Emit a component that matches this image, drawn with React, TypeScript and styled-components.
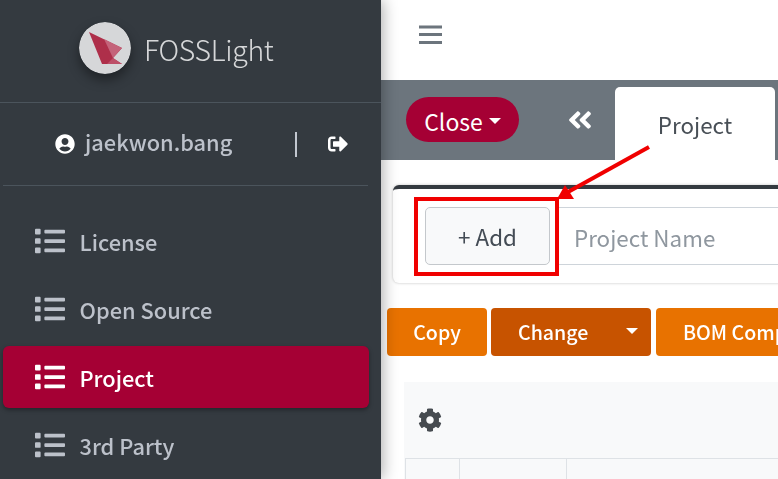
import React from "react";
import styled, { createGlobalStyle } from "styled-components";
import { FaList, FaUserCircle, FaSignOutAlt, FaCog, FaAngleDoubleLeft } from "react-icons/fa";

const Global = createGlobalStyle`
  html, body { margin: 0; padding: 0; background: #fff; overflow: hidden; }
  * { box-sizing: border-box; }
  body { font-family: "Noto Sans CJK KR", "Noto Sans", sans-serif; }
`;

const Page = styled.div`
  position: relative;
  display: flex;
  width: 778px;
  height: 479px;
  overflow: hidden;
`;

const Sidebar = styled.aside`
  flex: 0 0 381px;
  background: #343a40;
  box-shadow: 2px 0 14px rgba(0, 0, 0, 0.32);
  z-index: 1;
  filter: blur(0.35px);
`;

const Brand = styled.div`
  height: 103px;
  border-bottom: 1px solid #4b545c;
  display: flex;
  align-items: flex-start;
  padding: 22px 0 0 79px;
  gap: 14px;
`;

const LogoDisc = styled.svg`
  width: 52px;
  height: 52px;
  border-radius: 50%;
  box-shadow: 0 6px 12px rgba(0, 0, 0, 0.4);
  flex: none;
`;

const BrandName = styled.span`
  font-size: 28.4px;
  font-weight: 300;
  line-height: 54px;
  color: rgba(255, 255, 255, 0.8);
  letter-spacing: -0.3px;
  margin-left: -1px;
`;

const UserPanel = styled.div`
  height: 83px;
  margin: 0 13px 0 3px;
  border-bottom: 1px solid #4b545c;
  display: flex;
  align-items: center;
  color: #bcc1ca;
  padding: 0 0 0 52px;
  font-size: 21.8px;
  font-weight: 500;
  svg { color: #fff; flex: none; }
`;

const UserName = styled.span`
  margin-left: 10px;
  width: 210px;
  line-height: 1;
  padding-bottom: 4px;
`;

const Divider = styled.span`
  width: 2px;
  height: 25px;
  background: #c2c7d0;
  margin-right: 31px;
`;

const Nav = styled.nav`
  display: flex;
  flex-direction: column;
  gap: 6px;
  padding: 24px 12px 0 3px;
`;

const NavItem = styled.a<{ $active?: boolean }>`
  display: flex;
  align-items: center;
  gap: 14.5px;
  height: 62px;
  padding-left: 32px;
  border-radius: 6px;
  font-size: 21.8px;
  font-weight: 500;
  color: ${(p) => (p.$active ? "#fff" : "#bcc1ca")};
  background: ${(p) => (p.$active ? "#a50034" : "transparent")};
  box-shadow: ${(p) => (p.$active ? "0 2px 4px rgba(0,0,0,.35)" : "none")};
  svg { flex: none; }
`;

const Main = styled.main`
  flex: 1;
  min-width: 0;
  display: flex;
  flex-direction: column;
  filter: blur(0.35px);
`;

const TopBar = styled.header`
  height: 80px;
  flex: none;
  display: flex;
  align-items: center;
  padding: 0 0 10px 37px;
  color: #6c757d;
  background: #fff;
`;

const MenuGlyph = styled.svg`
  width: 24px;
  height: 20px;
`;

const TabBar = styled.div`
  height: 80px;
  flex: none;
  background: #6c757d;
  display: flex;
  align-items: flex-start;
  padding-left: 25px;
`;

const CloseButton = styled.button`
  margin-top: 17px;
  width: 113px;
  height: 45px;
  border: 0;
  border-radius: 23px;
  background: #a50034;
  color: #fff;
  font: inherit;
  font-size: 23px;
  display: flex;
  align-items: center;
  justify-content: center;
  gap: 6px;
  padding: 2px 0 0;
`;

const Caret = styled.i`
  width: 0;
  height: 0;
  border-left: 6px solid transparent;
  border-right: 6px solid transparent;
  border-top: 6px solid #fff;
`;

const Collapse = styled.span`
  margin: 26px 0 0 47px;
  color: #fff;
  width: 49px;
  display: flex;
  line-height: 0;
`;

const Tab = styled.div`
  margin-top: 7px;
  width: 160px;
  height: 73px;
  background: #fff;
  border-radius: 5px 5px 0 0;
  color: #495057;
  font-size: 22.4px;
  text-align: center;
  line-height: 74px;
`;

const Content = styled.div`
  flex: 1;
  min-height: 0;
  padding: 25px 0 0 6px;
`;

const SearchCard = styled.section`
  width: 420px;
  height: 98px;
  margin-left: 6px;
  border-top: 4px solid #343a40;
  border-radius: 6px;
  background: #fff;
  box-shadow: 0 0 3px rgba(0, 0, 0, 0.25);
  display: flex;
  gap: 6px;
  padding: 18px 0 0 32px;
`;

const AddButton = styled.button`
  width: 125px;
  height: 58px;
  background: #f8f9fa;
  border: 1px solid #c4c8cc;
  border-radius: 5px;
  font: inherit;
  font-size: 22.4px;
  color: #444c55;
  padding: 0;
`;

const NameField = styled.div`
  flex: 1;
  height: 58px;
  border: 1px solid #ced4da;
  border-right: 0;
  font-size: 22.4px;
  color: #8f979f;
  padding-left: 17px;
  line-height: 58px;
`;

const Actions = styled.div`
  display: flex;
  margin-top: 25px;
  height: 48px;
  width: 420px;
`;

const ActionButton = styled.button<{ $w: number; $gap: number; $dark?: boolean }>`
  flex: 0 0 ${(p) => p.$w}px;
  margin-right: ${(p) => p.$gap}px;
  background: ${(p) => (p.$dark ? "#c75300" : "#e87200")};
  border: 0;
  border-radius: 4px;
  color: #fff;
  font: inherit;
  font-size: 19.6px;
  font-weight: 500;
  display: flex;
  align-items: center;
  justify-content: center;
  padding: 0 0 2px;
  white-space: nowrap;
  overflow: hidden;
`;

const SplitButton = styled(ActionButton)`
  justify-content: flex-start;
  padding-left: 27px;
`;

const ChangeLabel = styled.span`
  margin-right: 38px;
`;

const GridPanel = styled.section`
  margin: 26px 0 0 17px;
  height: 97px;
  background: #f8f9fa;
  padding: 26px 0 0 0;
  color: #464b50;
`;

const GearSlot = styled.div`
  height: 50px;
  padding-left: 14px;
  line-height: 0;
`;

const HeaderRow = styled.div`
  display: grid;
  grid-template-columns: 54px 107px 1fr;
  height: 21px;
  margin-left: 1px;
  border-top: 1px solid #dee2e6;
  border-left: 1px solid #dee2e6;
`;

const HeaderCell = styled.div`
  border-right: 1px solid #dee2e6;
  &:last-child { border-right: 0; }
`;

const Annotation = styled.svg`
  position: absolute;
  left: 0;
  top: 0;
  width: 778px;
  height: 479px;
  z-index: 2;
  pointer-events: none;
`;

export default function App() {
  return (
    <Page>
      <Global />
      <Sidebar>
        <Brand>
          <LogoDisc viewBox="0 0 52 52">
            <circle cx="26" cy="26" r="26" fill="#d6d7d9" />
            <polygon points="10,10 43,26 34,36 43,42 23,42" fill="#ae2f4a" />
            <polygon points="25,17 43,26 34,36" fill="#c4637a" />
            <polygon points="34,36 43,42 28,42" fill="#bd4f68" />
          </LogoDisc>
          <BrandName>FOSSLight</BrandName>
        </Brand>
        <UserPanel>
          <FaUserCircle size={20} />
          <UserName>jaekwon.bang</UserName>
          <Divider />
          <FaSignOutAlt size={20} />
        </UserPanel>
        <Nav>
          <NavItem><FaList size={30} />License</NavItem>
          <NavItem><FaList size={30} />Open Source</NavItem>
          <NavItem $active><FaList size={30} />Project</NavItem>
          <NavItem><FaList size={30} />3rd Party</NavItem>
        </Nav>
      </Sidebar>
      <Main>
        <TopBar>
          <MenuGlyph viewBox="0 0 24 20">
            <path d="M1 2h23M1 9.5h23M1 17.5h23" stroke="currentColor" strokeWidth="3" fill="none" />
          </MenuGlyph>
        </TopBar>
        <TabBar>
          <CloseButton>Close<Caret /></CloseButton>
          <Collapse><FaAngleDoubleLeft size={28} /></Collapse>
          <Tab>Project</Tab>
        </TabBar>
        <Content>
          <SearchCard>
            <AddButton>+ Add</AddButton>
            <NameField>Project Name</NameField>
          </SearchCard>
          <Actions>
            <ActionButton $w={100} $gap={4}>Copy</ActionButton>
            <SplitButton $w={160} $gap={5} $dark>
              <ChangeLabel>Change</ChangeLabel><Caret />
            </SplitButton>
            <SplitButton $w={160} $gap={0}>BOM Compare</SplitButton>
          </Actions>
          <GridPanel>
            <GearSlot><FaCog size={24} /></GearSlot>
            <HeaderRow>
              <HeaderCell />
              <HeaderCell />
              <HeaderCell />
            </HeaderRow>
          </GridPanel>
        </Content>
      </Main>
      <Annotation viewBox="0 0 778 479">
        <rect x="416" y="199" width="141" height="75" fill="none" stroke="#f00000" strokeWidth="4" />
        <line x1="649" y1="147" x2="568" y2="192" stroke="#f00000" strokeWidth="4" />
        <polygon points="557,199 565,185 574,199" fill="#f00000" />
      </Annotation>
    </Page>
  );
}
